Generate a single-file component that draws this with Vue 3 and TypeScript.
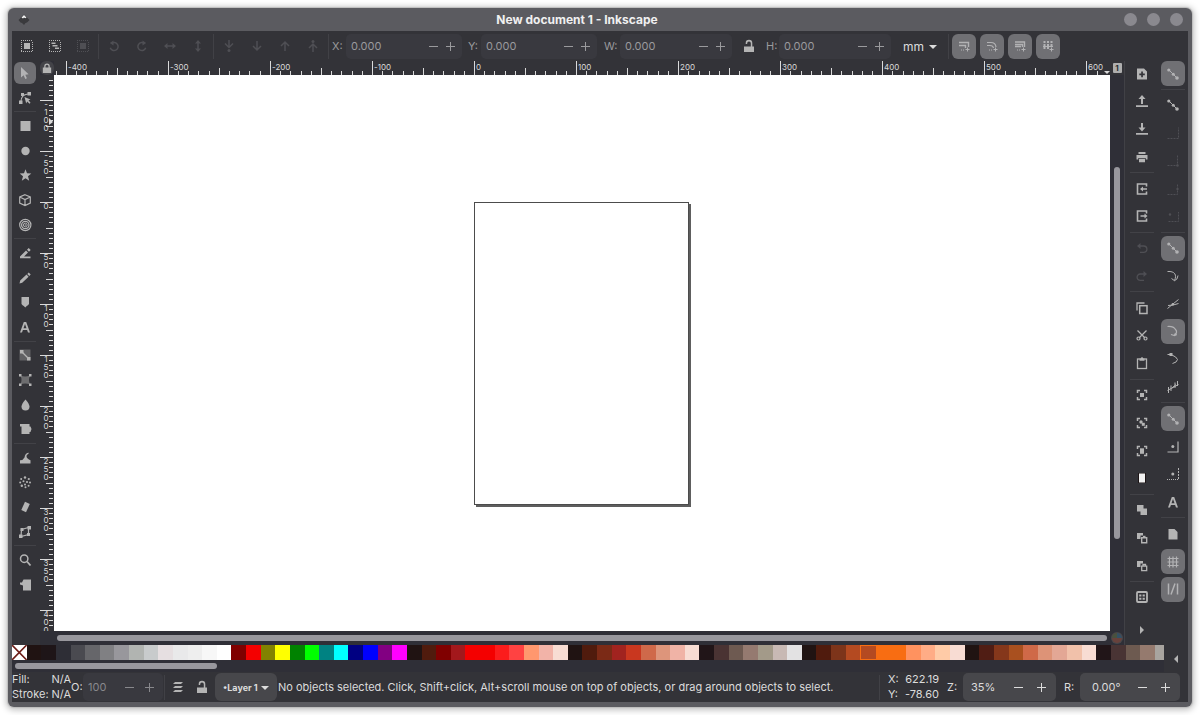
<script setup lang="ts">
import { ref } from 'vue'

interface Tool {
  icon: string
  label: string
  active?: boolean
  dim?: boolean
}

const line = 'fill="none" stroke="currentColor"'
const dotted = `<path d="M0 .500h12M0 11.500h12M.500 2v9M11.500 2v9" ${line} stroke-dasharray="1 1"/>`
const nodesDiagonal = `<path d="M2 2 10.500 10.500" ${line}/><circle cx="1.800" cy="2" r="1.600"/><circle cx="6.300" cy="6.200" r="1.500"/><circle cx="10" cy="10" r="1.800"/>`
const corners = `<path d="M4 1.500H1.500V4M8 1.500h2.500V4M4 10.500H1.500V8M8 10.500h2.500V8" ${line} stroke-width="1.500"/>`
const letterA = '<path fill-rule="evenodd" d="M4.800 1h2.400L11 11.500H9L8.100 9H3.900L3 11.500H1ZM6 3 4.500 7.300h3Z"/>'

const icons: Record<string, string> = {
  selectAll: `${dotted}<rect x="3" y="3" width="6" height="6"/>`,
  selectLayers: `${dotted}<path d="M2.500 2.500h4V4h-4ZM3.500 5h5v1.500h-5ZM6 7.500h4V9H6Z"/>`,
  deselect: `${dotted}<rect x="3" y="3" width="6" height="6"/>`,
  rotateLeft: `<path d="M3.500 3.500a4 4 0 1 1-1.200 4.300" ${line} stroke-width="1.500"/><path d="M5.500.500v5L1.800 3Z"/>`,
  rotateRight: `<path d="M8.500 3.500a4 4 0 1 0 1.200 4.300" ${line} stroke-width="1.500"/><path d="M6.500.500v5L10.200 3Z"/>`,
  flipH: `<path d="M2 6h8" ${line} stroke-width="1.500"/><path d="M0 6l3.500-3v6ZM12 6 8.500 3v6Z"/>`,
  flipV: `<path d="M6 2v8" ${line} stroke-width="1.500"/><path d="M6 0 3 3.500h6ZM6 12 3 8.500h6Z"/>`,
  toBottom: `<path d="M6 0v7M2 3.500l4 4 4-4" ${line} stroke-width="1.500"/><circle cx="6" cy="10.500" r="1.500"/>`,
  lower: `<path d="M6 1v9M2 6l4 4 4-4" ${line} stroke-width="1.500"/>`,
  raise: `<path d="M6 11V2M2 6l4-4 4 4" ${line} stroke-width="1.500"/>`,
  toTop: `<circle cx="6" cy="1.500" r="1.500"/><path d="M6 12V4M2 8l4-4 4 4" ${line} stroke-width="1.500"/>`,
  scaleStroke: `<path d="M1 2.500h9.500V7M1 5.500h6.500V8" ${line} stroke-width="1.400"/><path d="M3 10h4" ${line} stroke-dasharray="1 1"/><path d="M9.500 7.500v4M7.500 9.500h4" ${line}/>`,
  scaleCorner: `<path d="M1 2.500h4q4.500 0 5 4.500M1 5.500h3q3 0 3.500 2.500" ${line} stroke-width="1.200"/><path d="M3 10h4" ${line} stroke-dasharray="1 1"/><path d="M9.500 7.500v4M7.500 9.500h4" ${line}/>`,
  scaleGradient: `<path d="M1 2h9.500v5M1 4.500h7.500V7M1 6.500h6" ${line} stroke-width="1.400"/><path d="M3 10h4" ${line} stroke-dasharray="1 1"/><path d="M9.500 7.500v4M7.500 9.500h4" ${line}/>`,
  scalePattern: `<path d="M2.500 1v8M6 1v8M9.500 1v6" ${line} stroke-width="2" stroke-dasharray="2 1"/><path d="M1 6.500h10" ${line}/><path d="M9.500 7.500v4M7.500 9.500h4" ${line}/>`,
  pointer: '<path d="M2 0v10.500l2.600-2.200 1.700 3.700 1.600-.800-1.600-3.500 3.300-.400Z"/>',
  node: `<path d="M2 9.500C2 5 4 2.500 9 2M5.500 5" ${line} stroke-width="1.200"/><rect x="0" y="8.500" width="3.500" height="3.500"/><rect x="8.500" y="0" width="3.500" height="3.500"/><rect x="2" y="1" width="3" height="3"/><path d="m5.500 5 6 2.500-2 .800 2 2.500-1 1-2.300-2.200-1 1.800Z"/>`,
  square: '<rect x="1.500" y="1" width="10" height="10"/>',
  circle: '<circle cx="6.500" cy="6" r="4.200"/>',
  star: '<path d="M6.500 .200 8 4.300 12.300 4.500 9 7.300 10.200 11.700 6.500 9.200 2.800 11.700 4 7.300.700 4.500 5 4.300Z"/>',
  cube: `<path d="M6 .700 11.300 3v6L6 11.500.700 9V3ZM.700 3 6 5.500 11.300 3M6 5.500v6" ${line} stroke-width="1.200"/>`,
  spiral: `<circle cx="6.300" cy="6" r="5.600" ${line} stroke-width="1.200"/><circle cx="6.300" cy="6" r="3.700" ${line} stroke-width="1.300"/><circle cx="6.300" cy="6" r="1.900" ${line}/><circle cx="6.300" cy="6" r=".700"/>`,
  pen: `<path d="M1 9.500 7 3.500l2 2L5 9.500h6.500v1.700H1ZM8 2.700 9.700 1l2 2L10 4.700Z"/>`,
  pencil: '<path d="M.500 11.500 1.200 8.500 7.500 2.600l2.100 2.100-6.400 6ZM8.300 1.900 9.700.500l2 2-1.400 1.400Z"/>',
  calligraphy: '<path d="M2.500 1h7.500v7q-1 1.600-2.300 1.900L6.300 11.500 4.800 9.900Q3.500 9.600 2.500 8Z"/>',
  text: letterA,
  gradient: '<rect x=".500" y=".500" width="11" height="11" opacity=".350"/><path d="M2 2 10 10" fill="none" stroke="currentColor" stroke-width="1.300"/><rect x="1" y="1" width="3.500" height="3.500"/><rect x="8" y="8" width="3.500" height="3.500"/>',
  mesh: '<path d="M1.500 1.500Q6 3.500 11 1.500 9 6 11 10.500 6 8.500 1.500 10.500 3.500 6 1.500 1.500" opacity=".450"/><path d="M0 0h2.500v2.500H0ZM10 0h2.500v2.500H10ZM0 9.500h2.500V12H0ZM10 9.500h2.500V12H10Z"/>',
  drop: '<path d="M6.500 .500Q10.500 5 10.500 7.500a4 4 0 0 1-8 0Q2.500 5 6.500 .500Z"/>',
  bucket: '<path d="M1 1h9.500v2.500h1L12.500 6l-1 3h-1v2h-8V3.500H1Z"/>',
  tweak: '<path d="M1 11.500V8.200q3 .200 4.500-2.700Q6 1 10 .800L9.200 2q-2 .600-1.700 2.600.400 2.400 4 3.600v3.300Z"/>',
  spray: '<circle cx="6" cy="1.500" r="1.200"/><circle cx="2.200" cy="3" r="1"/><circle cx="9.800" cy="3" r="1.100"/><circle cx="1.200" cy="6.500" r="1"/><circle cx="4.500" cy="5.200" r="1"/><circle cx="8" cy="6" r="1.100"/><circle cx="11" cy="6.500" r="1"/><circle cx="2.800" cy="9.800" r="1.200"/><circle cx="6" cy="8.500" r="1"/><circle cx="6.500" cy="11.300" r="1"/><circle cx="9.600" cy="9.800" r="1"/>',
  eraser: '<path d="M6 .800 10.800 3 7 11.200 2.300 9Z"/>',
  connector: `<path d="M2.500 3.500 9.500 1.500 9.500 8.500 2 10.500Z" ${line} stroke-width="1.200"/><path d="M1.500 2h3v3h-3ZM8.500 0h3.500v3.500H8.500ZM8 7h3v3H8ZM0 8.500h3.500V12H0Z"/>`,
  zoom: `<circle cx="5.200" cy="4.700" r="3.700" ${line} stroke-width="1.500"/><path d="m8 7.500 3.500 4" ${line} stroke-width="1.800"/>`,
  pages: '<path d="M4.500.500h7.500v11H4V6.500L1 5.500v-2h2Z"/>',
  docNew: '<path fill-rule="evenodd" d="M1 .500h7l3 3v8H1ZM5.200 3.500v2H3.300v1.700h1.900v2h1.700v-2h1.900V5.500H6.900v-2Z"/>',
  open: '<path d="M6 0 2.500 4H5v5h2V4h2.500ZM0 10.300h12V12H0Z"/>',
  save: '<path d="M6 8.500 2.500 4.500H5V0h2v4.500h2.500ZM0 10H12V11.700H0Z"/>',
  print: '<path fill-rule="evenodd" d="M2.500 1h7v2h-7ZM.500 4h11v4.500H9.700V7H2.300v1.500H.500ZM3 7.800h6v3.400H3Z"/>',
  import: `<path d="M10.500 3.500V1h-9v10h9V8.500" ${line} stroke-width="1.600"/><path d="m4 6 3-2.500v1.700h4v1.600H7v1.700Z"/>`,
  export: `<path d="M10.500 3.500V1h-9v10h9V8.500" ${line} stroke-width="1.600"/><path d="m11.500 6-3-2.500v1.700h-4v1.600h4v1.700Z"/>`,
  undo: `<path d="M2.500 4h5.200a3.200 3.200 0 0 1 0 6.400H4" ${line} stroke-width="1.300"/><path d="M4.500 1v6L1 4Z"/>`,
  redo: `<path d="M9.500 4H4.300a3.200 3.200 0 0 0 0 6.400H8" ${line} stroke-width="1.300"/><path d="M7.500 1v6L11 4Z"/>`,
  copy: `<path d="M1 8.500V1h7.500" ${line} stroke-width="1.300"/><rect x="3.700" y="3.700" width="7.300" height="7.800" ${line} stroke-width="1.500"/>`,
  cut: `<path d="M1.500 1.500 9 9M10.500 1.500 3 9" ${line} stroke-width="1.300"/><circle cx="2.500" cy="9.500" r="1.500" ${line} stroke-width="1.200"/><circle cx="9.500" cy="9.500" r="1.500" ${line} stroke-width="1.200"/>`,
  paste: `<rect x="1.500" y="2" width="9" height="9.500" ${line} stroke-width="1.300"/><path d="M3.500 1.500h1.300a1.200 1.200 0 0 1 2.400 0h1.300v2.300h-5Z"/>`,
  zoomSel: `${corners}<rect x="4" y="4" width="4" height="4"/>`,
  zoomDraw: `${corners}<circle cx="5" cy="5" r="1.700"/><rect x="5.800" y="5.800" width="3" height="3"/>`,
  zoomPage: `${corners}<rect x="4" y="3.300" width="4" height="5.500"/>`,
  zoomFit: '<path d="M2 1h8v10H2Z" fill="#1c1415"/><rect x="3" y="1.500" width="6" height="9" fill="#f2f2f2"/>',
  duplicate: '<path d="M1 1h6.500v3.500H11V11H4.500V7.500H1Z"/>',
  clone: `<path d="M1 1h6v2.500H4.500V7H1Z"/><path d="M5.700 5.700h5v5h-5Z" ${line} stroke-width="1.400"/><rect x="7" y="3.800" width="2.500" height="2"/>`,
  unlink: `<path d="M1 1h6v2.500H4.500V7H1Z"/><path d="M5.700 6.200h5v4.500h-5ZM7 6V4.500h2.500V6" ${line} stroke-width="1.300"/>`,
  dialog: `<rect x="1" y="1" width="10" height="10" rx="1" ${line} stroke-width="1.800"/><path d="M3.200 3.500h2.200v2H3.200ZM6.600 3.500h2.200v2H6.600ZM3.200 6.700h2.200v2H3.200ZM6.600 6.700h2.200v2H6.600Z"/>`,
  snap: nodesDiagonal,
  bbox: `<path d="M.500 11.500h11V.500" ${line} stroke-dasharray="2 1"/>`,
  bboxCorner: `<path d="M.500 10.500h10V.500" ${line} stroke-dasharray="2 1"/><circle cx="10.500" cy="10.500" r="1.200"/>`,
  bboxEdge: `<path d="M.500 11.500h10V.500" ${line} stroke-dasharray="2 1"/><circle cx="10.500" cy="6" r="1.200"/>`,
  bboxCenter: `<path d="M1.500 11.500h10V2" ${line} stroke-dasharray="2 1"/><circle cx="3" cy="4.500" r="1.200"/>`,
  snapPath: `<path d="M.500 1.500C8 1 10 5 7.500 10.500M4.500 8.500l3 2.200Q10.500 10 11 5.500" ${line}/>`,
  intersect: `<path d="M.500 10.500 11.500 1.500M1 7.500q5 0 10.500-2" ${line}/><circle cx="5.800" cy="6.300" r="1.200"/>`,
  cusp: `<path d="M.500 1.500Q6.500 1 8.500 4.500M8.500 4.500Q11 7 7.500 10.500L4 9.500" ${line} stroke-width="1.200"/><circle cx="8.500" cy="9.500" r="1.300"/>`,
  smooth: `<path d="M.500 1.500H4Q10 4 10.500 6.500 10 9.500 5.500 10.500" ${line}/><rect x="2.500" y="0" width="3" height="3"/>`,
  midpoint: `<path d="M1.500 12V6M4 10V4.500M.500 9.500l11-6M8 7V1.500M10.500 5V0M5 7l4-3.500" ${line}/>`,
  center: `<path d="M.500 11h10.500V.500" ${line} stroke-width="1.200"/><circle cx="5.800" cy="5.500" r="1.500"/>`,
  rotationCenter: `<path d="M0 11.500h11" ${line} stroke-dasharray="1 1"/><path d="M11.500 0v12" ${line} stroke-dasharray="2 1"/><circle cx="5.800" cy="6" r="1.500"/>`,
  page: '<path d="M1.500 1h6l3 3v7.500h-9Z"/>',
  grid: `<path d="M2.500 .500v11M6 .500v11M9.500 .500v11M.500 2.500h11M.500 6h11M.500 9.500h11" ${line} stroke-width="1.200"/>`,
  guides: `<path d="M1.500 .500v11M10.500 .500v11M8 .500 4 11.500" ${line} stroke-width="1.500"/>`,
  lock: '<path fill-rule="evenodd" d="M1 5.500h1.700V4a3.300 3.300 0 0 1 6.600 0v1.500H11V12H1ZM4.200 5.500h3.600V4a1.800 1.800 0 0 0-3.600 0Z"/>',
  unlock: '<path d="M1 6.500h6.800V3.200a1.800 1.800 0 0 0-3.600 0V4H2.700V3a3.300 3.300 0 0 1 6.600 0v3.500H11V12H1Z"/>',
  layers: '<path d="M3 1h8l-2 2H1ZM3 5h8L9 7H1ZM3 9h8l-2 2H1Z"/>',
  right: '<path d="M4 2 8 6 4 10Z"/>',
  left: '<path d="M8 2 4 6l4 4Z"/>',
}

const t = (icon: string, label: string, state: 'active' | 'dim' | '' = ''): Tool => ({
  icon,
  label,
  active: state === 'active',
  dim: state === 'dim',
})

const editGroups: Tool[][] = [
  [t('selectAll', 'Select all'), t('selectLayers', 'Select all in all layers'), t('deselect', 'Deselect', 'dim')],
  [t('rotateLeft', 'Rotate left', 'dim'), t('rotateRight', 'Rotate right', 'dim'), t('flipH', 'Flip horizontal', 'dim'), t('flipV', 'Flip vertical', 'dim')],
  [t('toBottom', 'Lower to bottom', 'dim'), t('lower', 'Lower', 'dim'), t('raise', 'Raise', 'dim'), t('toTop', 'Raise to top', 'dim')],
]

const scaleTools: Tool[] = [
  t('scaleStroke', 'Scale stroke width', 'active'),
  t('scaleCorner', 'Scale rounded corners', 'active'),
  t('scaleGradient', 'Move gradients', 'active'),
  t('scalePattern', 'Move patterns', 'active'),
]

const toolbox: (Tool | null)[] = [
  t('pointer', 'Selector', 'active'), t('node', 'Node'), null,
  t('square', 'Rectangle'), t('circle', 'Ellipse'), t('star', 'Star'), t('cube', '3D box'), t('spiral', 'Spiral'), null,
  t('pen', 'Pen'), t('pencil', 'Pencil'), t('calligraphy', 'Calligraphy'), t('text', 'Text'), null,
  t('gradient', 'Gradient'), t('mesh', 'Mesh'), t('drop', 'Dropper'), t('bucket', 'Paint bucket'), null,
  t('tweak', 'Tweak'), t('spray', 'Spray'), t('eraser', 'Eraser'), t('connector', 'Connector'), null,
  t('zoom', 'Zoom'), t('pages', 'Pages'),
]

const commands: (Tool | null)[] = [
  t('docNew', 'New'), t('open', 'Open'), t('save', 'Save'), t('print', 'Print'), null,
  t('import', 'Import'), t('export', 'Export'), null,
  t('undo', 'Undo', 'dim'), t('redo', 'Redo', 'dim'), null,
  t('copy', 'Copy'), t('cut', 'Cut'), t('paste', 'Paste'), null,
  t('zoomSel', 'Zoom selection'), t('zoomDraw', 'Zoom drawing'), t('zoomPage', 'Zoom page'), t('zoomFit', 'Zoom page width'), null,
  t('duplicate', 'Duplicate'), t('clone', 'Clone'), t('unlink', 'Unlink clone'), null,
  t('dialog', 'Dialogs'),
]

const snaps: (Tool | null)[] = [
  t('snap', 'Snapping', 'active'), null,
  t('snap', 'Bounding boxes'), t('bbox', 'Box edges', 'dim'), t('bboxCorner', 'Box corners', 'dim'), t('bboxEdge', 'Edge midpoints', 'dim'), t('bboxCenter', 'Box centers', 'dim'), null,
  t('snap', 'Nodes', 'active'), t('snapPath', 'Paths'), t('intersect', 'Intersections'), t('cusp', 'Cusp nodes', 'active'), t('smooth', 'Smooth nodes'), t('midpoint', 'Midpoints'), null,
  t('snap', 'Others', 'active'), t('center', 'Object centers'), t('rotationCenter', 'Rotation centers'), t('text', 'Text baselines'), null,
  t('page', 'Page border'), t('grid', 'Grids', 'active'), t('guides', 'Guides', 'active'),
]

const x = ref('0.000')
const y = ref('0.000')
const w = ref('0.000')
const h = ref('0.000')
const unit = ref('mm')
const opacity = ref('100')
const layer = ref('Layer 1')
const zoom = ref('35%')
const rotation = ref('0.00°')

// Ruler scale: screen pixels per document unit, and the position of the page origin.
const scaleX = 1.0205
const scaleY = 1.02
const originX = 420
const originY = 127

const hTicks = Array.from({ length: 103 }, (_, i) => {
  const value = (i - 41) * 10
  return {
    value,
    x: Math.round(originX + value * scaleX),
    top: value % 100 === 0 ? 0 : value % 50 === 0 ? 7 : 10,
    label: value % 100 === 0 ? String(value) : '',
  }
}).filter((tick) => tick.x >= 0)

const vTicks = Array.from({ length: 109 }, (_, i) => {
  const value = (i - 25) * 5
  return {
    value,
    y: Math.round(originY + value * scaleY),
    left: value % 50 === 0 ? 0 : value % 25 === 0 ? 6 : 9,
    chars: value % 50 === 0 ? [...String(value)] : [],
  }
}).filter((tick) => tick.y >= 2)

const swatches: string[] = (
  '201312 1e1518 2e2e36 4a4a50 66666a 808083 98979c b1b4b1 c8cbcc e6dfe1 e9e9ea eeeeee f7f7f7 ffffff ' +
  '800000 f40000 828200 ffff00 008200 00ff00 008282 00ffff 000082 0000ff 820082 ff00ff ' +
  '201312 501b0d 800000 a3181c f40000 f40000 fb1c1c ff4242 ff976e f2b3a8 f8dcd3 ' +
  '201312 501b0d 7b2a16 a1231f c9371f cf694a dd957b f0b3a6 f8dcd3 ' +
  '211518 4a3333 6e5a51 957a70 a39a89 c8b9b4 e3e2e3 ' +
  '201312 501b0d 7d341a b44a21 b44a21 f86d12 f86d12 ff925f ffac86 ffcba7 f8dcd3 ' +
  '201312 501d14 85371b a9501f cf6948 dd9377 e3a795 f1c1aa f8dcd3 ' +
  '211518 493434 6d5a50 957a6e a8a49f'
)
  .split(' ')
  .map((c) => `#${c}`)
</script>

<template>
  <div class="desktop">
    <main class="window">
      <header class="titlebar">
        <svg class="logo" viewBox="0 0 12 12" aria-hidden="true">
          <path d="M6 .500 11.500 6 9 8.500 7.500 9 6 11 4 9 2.500 8.500.500 6Z" fill="#3a3a3d" />
          <path d="M6 1 8.500 3.500 7.200 4.300 6 3.500 5 4.500 3.500 3.500Z" fill="#f2f2f2" />
        </svg>
        <h1>New document 1 - Inkscape</h1>
        <div class="controls">
          <button type="button" aria-label="Minimize"></button>
          <button type="button" aria-label="Maximize"></button>
          <button type="button" aria-label="Close"></button>
        </div>
      </header>

      <section class="toolbar" aria-label="Tool controls">
        <template v-for="(group, g) in editGroups" :key="g">
          <button v-for="tool in group" :key="tool.icon" type="button" class="edit" :class="{ dim: tool.dim }" :aria-label="tool.label">
            <svg class="icon" viewBox="0 0 12 12" v-html="icons[tool.icon]"></svg>
          </button>
          <i class="vsep"></i>
        </template>
        <div class="pair px">
          <label for="fx">X:</label>
          <div class="spin wide">
            <input id="fx" v-model="x" type="text" />
            <button type="button" aria-label="Decrease X" class="minus"></button>
            <button type="button" aria-label="Increase X" class="plus"></button>
          </div>
        </div>
        <div class="pair py">
          <label for="fy">Y:</label>
          <div class="spin wide">
            <input id="fy" v-model="y" type="text" />
            <button type="button" aria-label="Decrease Y" class="minus"></button>
            <button type="button" aria-label="Increase Y" class="plus"></button>
          </div>
        </div>
        <div class="pair pw">
          <label for="fw">W:</label>
          <div class="spin">
            <input id="fw" v-model="w" type="text" />
            <button type="button" aria-label="Decrease width" class="minus"></button>
            <button type="button" aria-label="Increase width" class="plus"></button>
          </div>
        </div>
        <button type="button" class="ratio" aria-label="Lock ratio">
          <svg class="icon" viewBox="0 0 12 12" v-html="icons.unlock"></svg>
        </button>
        <div class="pair ph">
          <label for="fh">H:</label>
          <div class="spin">
            <input id="fh" v-model="h" type="text" />
            <button type="button" aria-label="Decrease height" class="minus"></button>
            <button type="button" aria-label="Increase height" class="plus"></button>
          </div>
        </div>
        <div class="drop unit">
          <select v-model="unit" aria-label="Unit">
            <option>mm</option>
            <option>px</option>
          </select>
        </div>
        <i class="vsep"></i>
        <div class="scales">
          <button v-for="tool in scaleTools" :key="tool.icon" type="button" class="tool active" :aria-label="tool.label">
            <svg class="icon" viewBox="0 0 12 12" v-html="icons[tool.icon]"></svg>
          </button>
        </div>
      </section>

      <section class="body">
        <nav class="toolbox" aria-label="Toolbox">
          <template v-for="(tool, i) in toolbox" :key="i">
            <button v-if="tool" type="button" class="tool" :class="{ active: tool.active }" :aria-label="tool.label">
              <svg class="icon" viewBox="0 0 12 12" v-html="icons[tool.icon]"></svg>
            </button>
            <i v-else class="hsep"></i>
          </template>
        </nav>

        <div class="stage">
          <button type="button" class="guide-lock" aria-label="Lock guides">
            <svg class="icon" viewBox="0 0 12 12" v-html="icons.lock"></svg>
          </button>
          <svg class="ruler-h" aria-hidden="true">
            <g v-for="tick in hTicks" :key="tick.value">
              <rect :x="tick.x" :y="tick.top" width="1" :height="14 - tick.top" />
              <text v-if="tick.label" :x="tick.x + 2" y="9">{{ tick.label }}</text>
            </g>
            <path d="M1050 10h6l-3 3Z" />
          </svg>
          <button type="button" class="page-badge" aria-label="Page 1"><span>1</span></button>
          <svg class="ruler-v" aria-hidden="true">
            <g v-for="tick in vTicks" :key="tick.value">
              <rect :x="tick.left" :y="tick.y" :width="13 - tick.left" height="1" />
              <text v-for="(ch, c) in tick.chars" :key="c" x="6" :y="tick.y + 7 + c * 8">{{ ch }}</text>
            </g>
            <path d="M9 43v7l4-3Z" />
          </svg>
          <svg class="canvas" role="img" aria-label="Drawing canvas">
            <rect x="422" y="129" width="215" height="303" fill="#5e5e5e" />
            <rect x="420.500" y="127.500" width="214" height="302" fill="#fff" stroke="#4c4c4c" />
          </svg>
          <div class="scroll-v"><span></span></div>
          <div class="scroll-h"><span></span></div>
          <button type="button" class="cms" aria-label="Color management">
            <svg class="icon" viewBox="0 0 12 12">
              <circle cx="6" cy="6" r="6" fill="#47474b" />
              <circle cx="6" cy="6" r="5" fill="#68423c" />
              <path d="M6 6V1A5 5 0 0 1 11 6Z" fill="#345064" />
              <path d="M6 6H1A5 5 0 0 1 6 1Z" fill="#48513f" />
            </svg>
          </button>
        </div>

        <nav class="commands" aria-label="Commands">
          <div class="stack">
            <template v-for="(tool, i) in commands" :key="i">
              <button v-if="tool" type="button" class="tool" :class="{ dim: tool.dim }" :aria-label="tool.label">
                <svg class="icon" viewBox="0 0 12 12" v-html="icons[tool.icon]"></svg>
              </button>
              <i v-else class="hsep"></i>
            </template>
          </div>
          <button type="button" class="more" aria-label="More commands">
            <svg class="icon" viewBox="0 0 12 12" v-html="icons.right"></svg>
          </button>
        </nav>

        <nav class="snapbar" aria-label="Snap controls">
          <template v-for="(tool, i) in snaps" :key="i">
            <button v-if="tool" type="button" class="tool" :class="{ active: tool.active, dim: tool.dim }" :aria-label="tool.label">
              <svg class="icon" viewBox="0 0 12 12" v-html="icons[tool.icon]"></svg>
            </button>
            <i v-else class="hsep"></i>
          </template>
        </nav>
      </section>

      <section class="palette" aria-label="Palette">
        <div class="palette-main">
          <div class="swatches">
            <button type="button" class="none" aria-label="No color">
              <svg viewBox="0 0 14 14" preserveAspectRatio="none"><path d="M0 0 14 14M14 0 0 14" stroke="#6d1d17" stroke-width="1.500" /></svg>
            </button>
            <button
              v-for="(color, i) in swatches"
              :key="i"
              type="button"
              :class="{ last: i === swatches.length - 1, marked: i === 57 }"
              :style="{ backgroundColor: color }"
              :aria-label="color"
            ></button>
          </div>
          <div class="palette-scroll"><span></span></div>
        </div>
        <button type="button" class="palette-menu" aria-label="Palette menu">
          <svg class="icon" viewBox="0 0 12 12" v-html="icons.left"></svg>
        </button>
      </section>

      <footer class="status">
        <dl class="style">
          <dt>Fill:</dt>
          <dd>N/A</dd>
          <dt>Stroke:</dt>
          <dd>N/A</dd>
        </dl>
        <label for="fo" class="lo">O:</label>
        <div class="spin opacity">
          <input id="fo" v-model="opacity" type="text" />
          <button type="button" aria-label="Decrease opacity" class="minus"></button>
          <button type="button" aria-label="Increase opacity" class="plus"></button>
        </div>
        <i class="vsep"></i>
        <button type="button" class="small" aria-label="Layers">
          <svg class="icon" viewBox="0 0 12 12" v-html="icons.layers"></svg>
        </button>
        <button type="button" class="small" aria-label="Lock layer">
          <svg class="icon" viewBox="0 0 12 12" v-html="icons.unlock"></svg>
        </button>
        <div class="drop layer">
          <select v-model="layer" aria-label="Layer">
            <option value="Layer 1">•Layer 1</option>
          </select>
        </div>
        <p class="message">No objects selected. Click, Shift+click, Alt+scroll mouse on top of objects, or drag around objects to select.</p>
        <i class="vsep"></i>
        <dl class="coords">
          <dt>X:</dt>
          <dd>622.19</dd>
          <dt>Y:</dt>
          <dd>-78.60</dd>
        </dl>
        <label for="fz" class="lz">Z:</label>
        <div class="spin lit zoomer">
          <input id="fz" v-model="zoom" type="text" />
          <button type="button" aria-label="Zoom out" class="minus"></button>
          <button type="button" aria-label="Zoom in" class="plus"></button>
        </div>
        <label for="fr" class="lr">R:</label>
        <div class="spin lit rotator">
          <input id="fr" v-model="rotation" type="text" />
          <button type="button" aria-label="Rotate left" class="minus"></button>
          <button type="button" aria-label="Rotate right" class="plus"></button>
        </div>
      </footer>
    </main>
  </div>
</template>

<style>
body {
  margin: 0;
  background: #fff;
}
</style>

<style scoped>
.desktop {
  box-sizing: border-box;
  display: flex;
  min-height: 100vh;
  padding: 8px;
  font-family: Inter, "Open Sans", sans-serif;
  font-size: 11px;
  line-height: 15px;
  color: #dcdcdc;
}

.desktop *,
.desktop *::before,
.desktop *::after {
  box-sizing: border-box;
}

button,
input,
select {
  margin: 0;
  padding: 0;
  border: 0;
  background: none;
  color: inherit;
  font: inherit;
}

.window {
  flex: 1;
  min-width: 0;
  display: flex;
  flex-direction: column;
  padding: 0 4px 5px;
  overflow: hidden;
  border-radius: 6px;
  background: #5b5b60;
  box-shadow: 0 0 1px 1px #bdbdbd, 0 1px 6px 2px rgba(0, 0, 0, 0.25);
}

.titlebar {
  display: flex;
  align-items: center;
  height: 23px;
  padding: 0 5px 0 6px;
}

.logo {
  width: 12px;
  height: 12px;
}

h1 {
  flex: 1;
  margin: 0;
  font-size: 12px;
  font-weight: 700;
  line-height: 16px;
  text-align: center;
  color: #f0f0f0;
}

.controls {
  display: flex;
  gap: 10px;
}

.controls button {
  width: 13px;
  height: 13px;
  border-radius: 50%;
  background: #8a898f;
}

.icon {
  display: block;
  width: 12px;
  height: 12px;
  fill: currentColor;
  overflow: visible;
}

.toolbar,
.body,
.palette,
.status {
  background: #333338;
}

.toolbar {
  display: flex;
  align-items: center;
  height: 30px;
  padding-left: 1px;
  color: #9a9a9d;
}

.edit,
.ratio,
.small {
  display: grid;
  place-items: center;
  flex: none;
  width: 28px;
  height: 26px;
  color: #b4b4b4;
}

.dim,
.edit.dim {
  color: #4f4f54;
}

.vsep {
  flex: none;
  width: 1px;
  height: 25px;
  margin: 0 1px;
  background: #414146;
}

.hsep {
  flex: none;
  width: 100%;
  height: 1px;
  background: #424247;
}

.pair {
  display: flex;
  align-items: center;
  justify-content: space-between;
  flex: none;
}

.px {
  width: 132px;
  padding-left: 2px;
}

.py {
  width: 129px;
  margin-left: 6px;
}

.pw {
  width: 128px;
  margin: 0 3px 0 7px;
}

.ph {
  width: 125px;
  margin-left: 3px;
}

.spin {
  display: flex;
  align-items: center;
  flex: none;
  width: 112px;
  height: 25px;
  padding: 0 3px 0 5px;
  border-radius: 5px;
  background: #39393f;
}

.spin.wide {
  width: 116px;
}

.spin input {
  flex: 1;
  width: 0;
  min-width: 0;
  height: 100%;
}

.spin button {
  position: relative;
  flex: none;
  width: 17px;
  height: 100%;
}

.minus::before,
.plus::before,
.plus::after {
  content: "";
  position: absolute;
  top: 50%;
  left: 50%;
  width: 9px;
  height: 1px;
  margin-left: -5px;
  background: currentColor;
}

.plus::after {
  width: 1px;
  height: 9px;
  margin: -4px 0 0 -1px;
}

.drop {
  position: relative;
  flex: none;
}

.drop::after {
  content: "";
  position: absolute;
  top: 50%;
  right: 0;
  margin-top: -1px;
  border: 4px solid transparent;
  border-top-color: currentColor;
  border-bottom: 0;
  pointer-events: none;
}

.drop select {
  display: block;
  width: 100%;
  height: 100%;
  appearance: none;
}

.unit {
  width: 34px;
  margin: 0 10px 0 12px;
  color: #dcdcdc;
  font-size: 12px;
}

.scales {
  display: flex;
  gap: 4px;
  margin-left: 2px;
}

.tool {
  display: grid;
  place-items: center;
  flex: none;
  width: 24px;
  height: 25px;
  border-radius: 6px;
}

.tool.active {
  background: #707074;
  color: #b2b2b4;
}

.body {
  flex: 1;
  display: flex;
  color: #b4b4b4;
}

.toolbox {
  display: flex;
  flex-direction: column;
  align-items: center;
  justify-content: space-between;
  flex: none;
  width: 28px;
  padding: 1px 4px 49px 2px;
}

.toolbox .tool {
  width: 22px;
  height: 22px;
}

.stage {
  flex: 1;
  min-width: 0;
  display: grid;
  grid-template: 14px 1fr 14px / 14px 1fr 14px;
  background: #2f2f37;
}

.stage svg {
  display: block;
}

.guide-lock {
  display: grid;
  place-items: center;
  border-radius: 6px;
  background: #434348;
}

.guide-lock .icon {
  width: 10px;
  height: 12px;
}

.ruler-h,
.ruler-v {
  width: 100%;
  height: 100%;
  overflow: hidden;
  background: #333338;
  fill: #dadada;
  font-size: 8px;
}

.ruler-v {
  contain: size;
  text-anchor: middle;
}

.canvas {
  width: 100%;
  height: 100%;
  background: #fff;
  contain: size;
}

.page-badge {
  display: grid;
  place-items: center;
  background: #333338;
}

.page-badge span {
  width: 9px;
  height: 10px;
  border-radius: 1px;
  background: #aeaeae;
  color: #2a2a2d;
  font-size: 8px;
  font-weight: 700;
  line-height: 10px;
}

.scroll-v {
  display: flex;
  align-items: center;
  justify-content: center;
}

.scroll-v span {
  width: 6px;
  height: 67%;
  border-radius: 3px;
  background: #98979d;
}

.scroll-h {
  grid-column: 1 / 3;
  padding: 4px 3px 0 17px;
}

.scroll-h span {
  display: block;
  height: 6px;
  border-radius: 3px;
  background: #98979d;
}

.cms {
  display: grid;
  place-items: center;
}

.commands {
  display: flex;
  flex-direction: column;
  flex: none;
  width: 35px;
  padding: 0 5px;
  border-left: 1px solid #414146;
}

.stack {
  flex: 1;
  display: flex;
  flex-direction: column;
  align-items: center;
  justify-content: space-between;
}

.more {
  display: grid;
  place-items: center;
  height: 31px;
  margin-top: 4px;
}

.snapbar {
  display: flex;
  flex-direction: column;
  align-items: center;
  justify-content: space-between;
  flex: none;
  width: 29px;
  padding: 0 3px 43px 2px;
}

.palette {
  display: flex;
}

.palette-main {
  flex: 1;
  min-width: 0;
  background: #2f2f37;
}

.swatches {
  display: flex;
  height: 15px;
}

.swatches button {
  flex: 1 1 0;
  min-width: 0;
}

.swatches .last {
  flex-grow: 0.6;
}

.swatches .marked {
  border: 1px solid #f86d12;
}

.swatches .none {
  background: #fff;
}

.none svg {
  display: block;
  width: 100%;
  height: 100%;
}

.palette-scroll {
  height: 12px;
  padding: 3px 3px 0;
}

.palette-scroll span {
  display: block;
  width: 17.6%;
  height: 6px;
  border-radius: 3px;
  background: #98979d;
}

.palette-menu {
  display: grid;
  place-items: center;
  width: 24px;
  color: #b4b4b4;
}

.status {
  display: flex;
  align-items: center;
  height: 30px;
}

.status dl {
  display: grid;
  grid-template-columns: auto 1fr;
  flex: none;
  margin: 0;
}

.status dd {
  margin: 0;
  text-align: right;
}

.status .style {
  width: 59px;
}

.lo {
  width: 12px;
}

.status .spin {
  height: 28px;
}

.status .opacity {
  width: 80px;
  color: #88888c;
}

.opacity button {
  width: 20px;
}

.small {
  width: 24px;
}

.status .layer {
  width: 62px;
  height: 28px;
  margin-left: 1px;
  border-radius: 6px;
  background: #47474b;
  font-size: 9px;
  font-weight: 700;
}

.layer select {
  padding-left: 8px;
}

.layer::after {
  right: 8px;
}

.message {
  flex: 1;
  min-width: 0;
  margin: 0 0 0 1px;
  overflow: hidden;
  white-space: nowrap;
}

.coords {
  width: 58px;
  padding-left: 7px;
}

.lz {
  width: 24px;
  padding-left: 8px;
}

.lr {
  width: 24px;
  padding-left: 8px;
}

.status .lit {
  padding-left: 8px;
  background: #47474b;
}

.lit button {
  width: 23px;
}

.status .zoomer {
  width: 93px;
}

.status .rotator {
  width: 100px;
  margin-right: 8px;
  padding-left: 12px;
}
</style>
